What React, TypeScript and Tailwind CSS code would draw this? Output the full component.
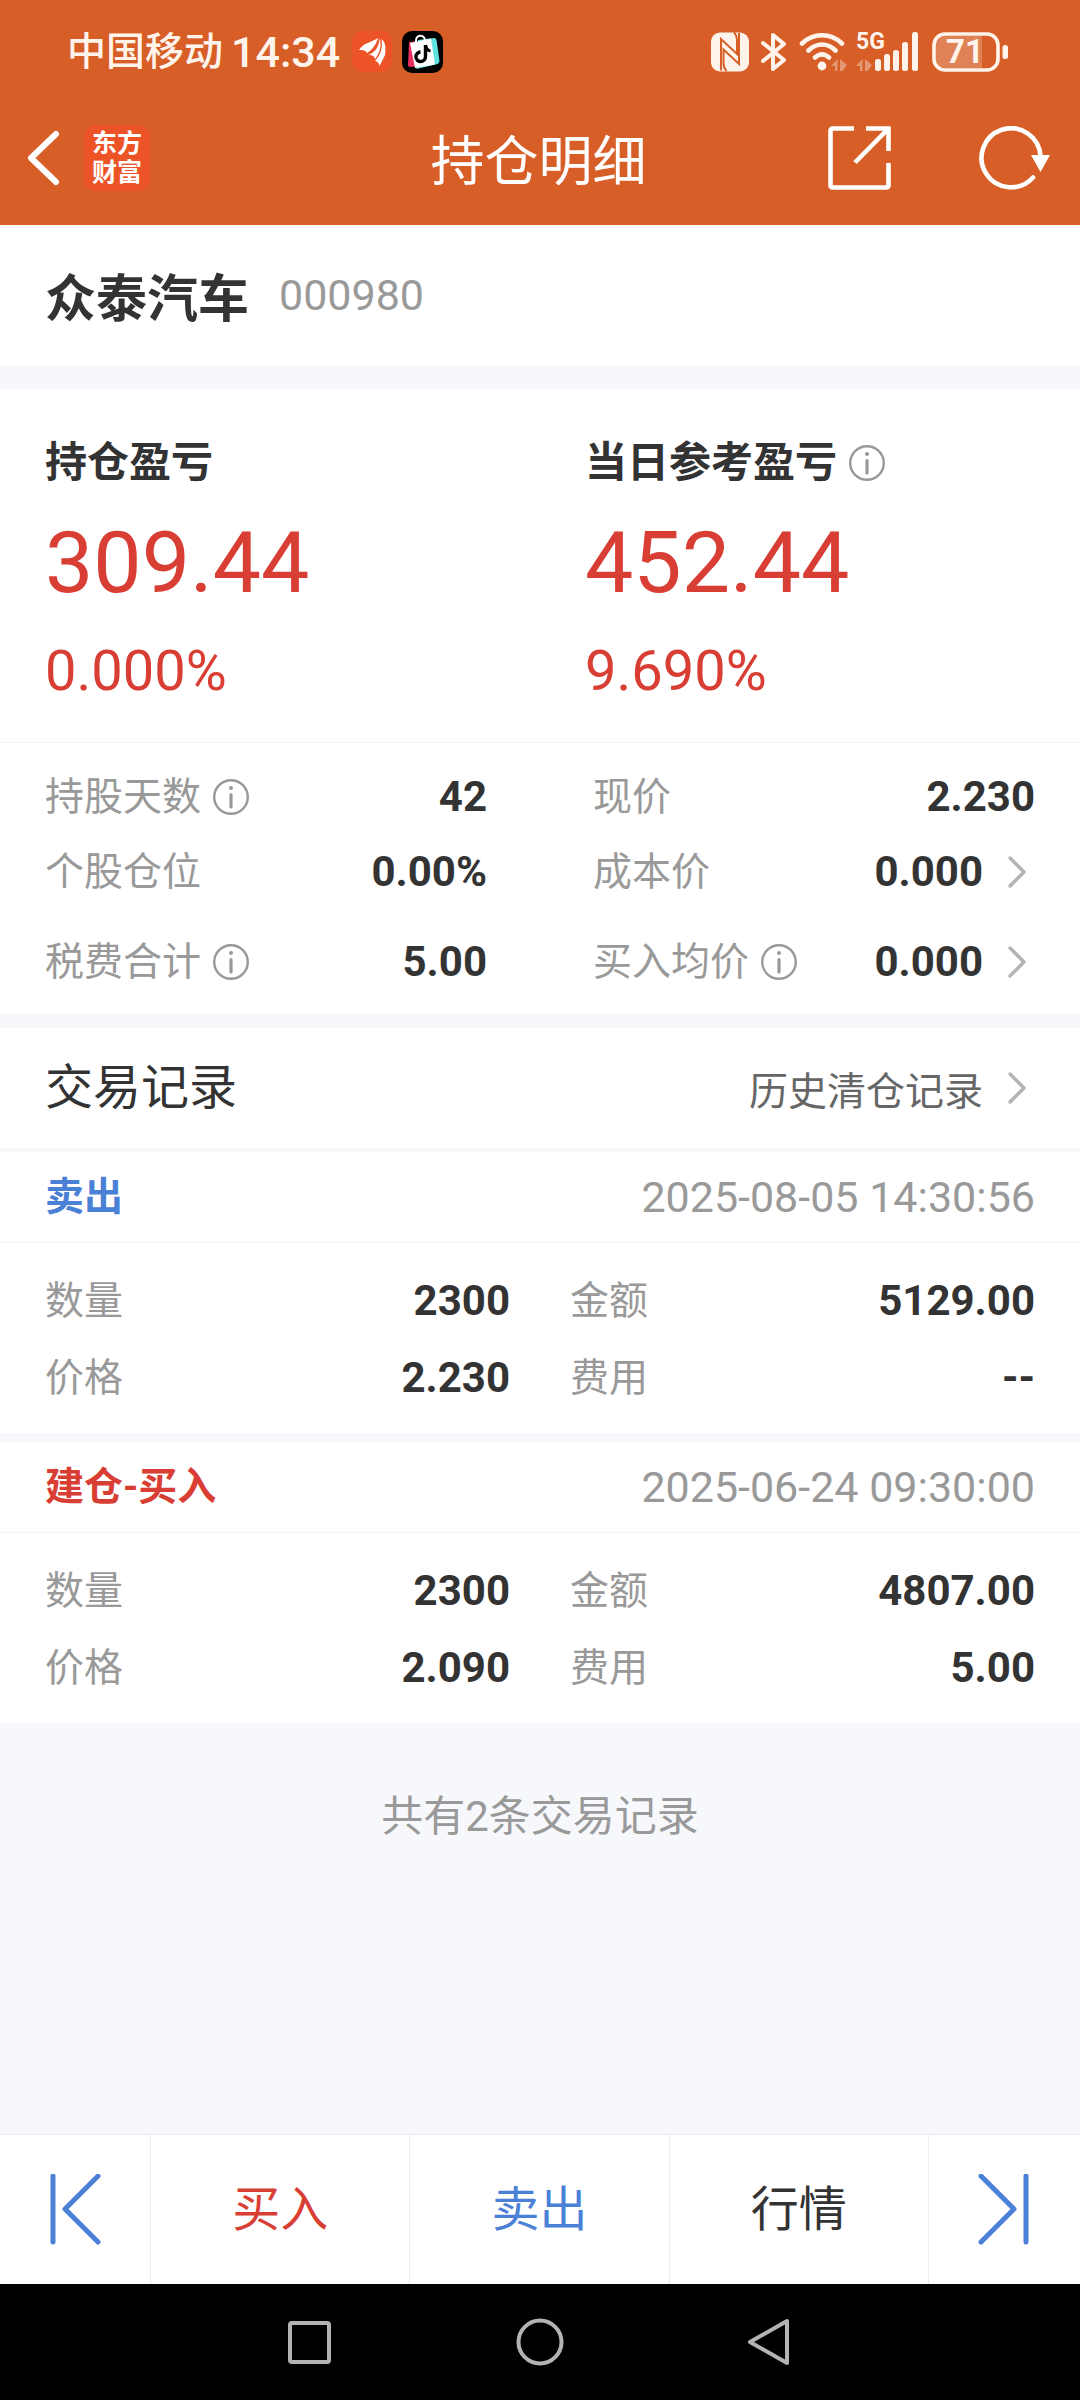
import type { ReactNode } from "react"

type Stat = { label: string; value: string; info?: boolean; more?: boolean }

const LEFT_STATS: Stat[] = [
  { label: "持股天数", value: "42", info: true },
  { label: "个股仓位", value: "0.00%" },
  { label: "税费合计", value: "5.00", info: true },
]

const RIGHT_STATS: Stat[] = [
  { label: "现价", value: "2.230" },
  { label: "成本价", value: "0.000", more: true },
  { label: "买入均价", value: "0.000", info: true, more: true },
]

const RECORDS = [
  {
    id: "r1",
    type: "卖出",
    color: "text-[#4a80d6]",
    time: "2025-08-05 14:30:56",
    fields: [["数量", "2300"], ["金额", "5129.00"], ["价格", "2.230"], ["费用", "--"]],
  },
  {
    id: "r2",
    type: "建仓-买入",
    color: "text-[#d83e34]",
    time: "2025-06-24 09:30:00",
    fields: [["数量", "2300"], ["金额", "4807.00"], ["价格", "2.090"], ["费用", "5.00"]],
  },
]

function InfoButton({ label }: { label: string }) {
  return (
    <button aria-label={`${label}说明`} className="ml-3 shrink-0">
      <svg width="36" height="36" viewBox="0 0 36 36" fill="none" stroke="#999" className="block">
        <circle cx="18" cy="18" r="16.8" strokeWidth="2.4" />
        <path d="M18 15.5v12.5" strokeWidth="3.2" strokeLinecap="round" />
        <circle cx="18" cy="9" r="2" fill="#999" stroke="none" />
      </svg>
    </button>
  )
}

function Chevron() {
  return (
    <svg width="20" height="34" viewBox="0 0 20 34" fill="none" stroke="#b4b4b4" strokeWidth="3.4" strokeLinecap="round" strokeLinejoin="round" className="ml-6 mr-2 shrink-0">
      <path d="M3 3l14 14L3 31" />
    </svg>
  )
}

function DataArrows({ x, y }: { x: number; y: number }) {
  return (
    <path
      transform={`translate(${x} ${y})`}
      d="M6.500 0v12H4V7H0zM9 12V0l7 6-4.500 6z"
      fill="#fff"
      opacity="0.35"
    />
  )
}

function StatusBar() {
  return (
    <div className="flex h-[91px] items-center justify-between pt-[13px] pl-[67px] pr-[71px] text-[#fff4ec]">
      <div className="flex items-center">
        <span className="text-[39px] leading-[48px] font-medium">中国移动</span>
        <span className="ml-2 text-[43px] leading-[48px] font-medium">14:34</span>
        <svg width="40" height="42" viewBox="0 0 40 42" className="ml-3">
          <rect width="40" height="41" rx="10" fill="#ec5428" />
          <path d="M7 19C12 11 19 12 26 7c-2 7-6 12-11 15-1-2.500-4-3.500-8-3z" fill="#fff" />
          <path d="M27.500 7c0 8-4 14-11 17 4 0 6 1 6.500 4C28 22 30 14 27.500 7z" fill="#fff" />
          <path d="M29.500 8c4 3 4.500 8 3.500 16L27.500 35c-.5-3-2-4.500-4.500-5C29 24 31 15 29.500 8z" fill="#fff" />
        </svg>
        <svg width="41" height="42" viewBox="0 0 41 42" className="ml-2.5">
          <rect width="41" height="42" rx="10" fill="#000" />
          <path d="M7 11l8-1 16 24-23 2q-2 0-2-2z" fill="#e8315f" />
          <path d="M16 9l16-2q2 0 2.500 2l3 21q0 2-2 3l-21 5z" fill="#5fe3e0" />
          <path d="M8 12l21-4.500 4 26L13 37z" fill="#fff" />
          <path d="M14 11c-1-8 8-8 9-2" fill="none" stroke="#fff" strokeWidth="2" />
          <path d="M23.500 14c.5 4 2 5.500 5 6" fill="none" stroke="#000" strokeWidth="3" />
          <path d="M23.500 14v11.500a4.800 4.800 0 1 1-5-4.500" fill="none" stroke="#000" strokeWidth="3.400" />
        </svg>
      </div>
      <div className="flex items-center">
        <svg width="38" height="40" viewBox="0 0 38 40">
          <rect width="38" height="39" y="0.500" rx="9" fill="currentColor" />
          <path d="M10 38.500V7l16 15V9c0-4-1.500-7-3-8.500M28 1v31L12.500 17.500V31c0 4 1.500 6.500 3 8" fill="none" stroke="#d75f27" strokeWidth="2" />
        </svg>
        <svg width="26" height="40" viewBox="0 0 26 40" fill="none" stroke="currentColor" strokeWidth="4" strokeLinecap="round" strokeLinejoin="round" className="ml-3">
          <path d="M2 11l21 17-11 9V3l11 9L2 29" />
        </svg>
        <svg width="49" height="40" viewBox="0 0 49 40" fill="none" stroke="currentColor" strokeWidth="4.600" strokeLinecap="round" className="ml-3">
          <path d="M3 11.500c11-11 29-11 40 0M9.500 18.500c8-8 19-8 27 0M16 25.500c4.500-4 9.500-4 14 0" />
          <circle cx="23" cy="34" r="4.400" fill="currentColor" stroke="none" />
          <g stroke="none"><DataArrows x={32} y={27} /></g>
        </svg>
        <div className="relative ml-2">
          <svg width="64" height="40" viewBox="0 0 64 40" fill="currentColor">
            <DataArrows x={0} y={27} />
            <rect x="19" y="27" width="6" height="12" rx="2.500" />
            <rect x="28" y="22" width="6" height="17" rx="2.500" />
            <rect x="37" y="18" width="6" height="21" rx="2.500" />
            <rect x="46" y="10" width="6" height="29" rx="2.500" />
            <rect x="56" y="0" width="6" height="39" rx="2.500" />
          </svg>
          <span className="absolute top-0 left-0 text-[23px] leading-5 font-bold">5G</span>
        </div>
        <div className="relative ml-3">
          <svg width="77" height="40" viewBox="0 0 77 40" fill="none">
            <path d="M12 4h38v32H12q-8 0-8-8V12q0-8 8-8z" fill="#fff" opacity="0.22" />
            <rect x="2" y="2" width="64" height="36" rx="11" stroke="currentColor" strokeWidth="3.600" />
            <rect x="70.500" y="13" width="5.500" height="14" rx="2.500" fill="currentColor" />
          </svg>
          <span className="absolute inset-y-0 left-0 w-[66px] text-center text-[33px] leading-10 font-bold">71</span>
        </div>
      </div>
    </div>
  )
}

function TitleBar() {
  return (
    <div className="grid h-[134px] grid-cols-[1fr_auto_1fr] items-center pl-[26px] pr-[29px]">
      <div className="flex items-center">
        <button aria-label="返回">
          <svg width="34" height="56" viewBox="0 0 34 56" fill="none" stroke="#fff" strokeWidth="6" strokeLinecap="round" strokeLinejoin="round" className="block">
            <path d="M30 4L5 28l25 24" />
          </svg>
        </button>
        <div className="ml-6 flex size-[66px] flex-col items-center justify-center rounded-xl bg-[#ec5428] text-[25px] leading-[29px] font-bold text-white">
          <span>东方</span>
          <span>财富</span>
        </div>
      </div>
      <h1 className="font-['Noto_Sans_CJK_SC',sans-serif] text-[54px] leading-[72px] text-white">持仓明细</h1>
      <div className="flex items-center justify-end gap-[87px]">
        <button aria-label="分享">
          <svg width="64" height="64" viewBox="0 0 64 64" fill="none" stroke="#fff" strokeWidth="4.600" className="block">
            <path d="M26 2.500H4.500a2 2 0 0 0-2 2v55a2 2 0 0 0 2 2h54a2 2 0 0 0 2-2V37" />
            <path d="M38 2.500h22.500V25M27 36.500L60 3" />
          </svg>
        </button>
        <button aria-label="刷新">
          <svg width="72" height="64" viewBox="0 0 72 64" fill="none" className="block">
            <path d="M61.500 30A29.500 29.500 0 1 0 54 51.500" stroke="#fff" strokeWidth="4.600" strokeLinecap="round" />
            <path d="M52 29h19l-9.500 17z" fill="#fff" />
          </svg>
        </button>
      </div>
    </div>
  )
}

function Profit({ label, amount, percent, info }: { label: string; amount: string; percent: string; info?: boolean }) {
  return (
    <div className="px-[45px] text-[#d83e34]">
      <div className="flex h-[60px] items-center">
        <h2 className="text-[42px] leading-[60px] font-bold text-[#333]">{label}</h2>
        {info && <InfoButton label={label} />}
      </div>
      <p className="mt-5 text-[86px] leading-[100px]">{amount}</p>
      <p className="mt-7 text-[56px] leading-[60px]">{percent}</p>
    </div>
  )
}

function StatColumn({ stats }: { stats: Stat[] }) {
  return (
    <dl className="flex-1">
      {stats.map((s) => (
        <div key={s.label} className="flex h-[75px] items-center last:mt-[15px]">
          <dt className="flex items-center text-[39px] leading-[48px] text-[#999]">
            {s.label}
            {s.info && <InfoButton label={s.label} />}
          </dt>
          <dd className="ml-auto flex items-center text-[42px] leading-[48px] font-bold text-[#333]">
            {s.value}
            {s.more && <Chevron />}
          </dd>
        </div>
      ))}
    </dl>
  )
}

function TradeRecord({ record }: { record: (typeof RECORDS)[number] }) {
  return (
    <article className="bg-white">
      <header className="flex h-[91px] items-center justify-between border-b border-[#f4f5f7] px-[45px]">
        <h3 className={`text-[39px] leading-[48px] font-bold ${record.color}`}>{record.type}</h3>
        <time className="text-[43px] leading-[48px] text-[#999]">{record.time}</time>
      </header>
      <dl className="grid grid-cols-2 gap-x-[60px] px-[45px] pt-[19px] pb-[17px]">
        {record.fields.map(([label, value]) => (
          <div key={label} className="flex h-[77px] items-center justify-between">
            <dt className="text-[39px] leading-[48px] text-[#999]">{label}</dt>
            <dd className="text-[42px] leading-[48px] font-bold text-[#333]">{value}</dd>
          </div>
        ))}
      </dl>
    </article>
  )
}

function StepButton({ label, children }: { label: string; children: ReactNode }) {
  return (
    <button aria-label={label} className="flex w-[151px] items-center justify-center">
      <svg width="54" height="72" viewBox="0 0 54 72" fill="none" stroke="#4a80d6" strokeWidth="5" strokeLinecap="round" strokeLinejoin="round">
        {children}
      </svg>
    </button>
  )
}

export default function App() {
  return (
    <div className="flex min-h-screen flex-col bg-[#f6f8fb] font-[Roboto,'Noto_Sans_CJK_SC',sans-serif]">
      <header className="bg-[#d75f27]">
        <StatusBar />
        <TitleBar />
      </header>

      <main className="flex-1">
        <section className="flex h-[140px] items-center bg-white px-[45px]">
          <h2 className="font-['Noto_Sans_CJK_SC',sans-serif] text-[51px] leading-[60px] font-bold text-[#333]">众泰汽车</h2>
          <span className="ml-[30px] text-[43px] leading-[60px] text-[#999]">000980</span>
        </section>

        <section className="mt-6 bg-white">
          <div className="grid grid-cols-2 border-b border-[#f4f5f7] pt-11 pb-[41px]">
            <Profit label="持仓盈亏" amount="309.44" percent="0.000%" />
            <Profit label="当日参考盈亏" amount="452.44" percent="9.690%" info />
          </div>
          <div className="flex gap-[106px] px-[45px] pt-4 pb-3.5">
            <StatColumn stats={LEFT_STATS} />
            <StatColumn stats={RIGHT_STATS} />
          </div>
        </section>

        <section className="mt-[15px]">
          <div className="flex h-[120px] items-center justify-between bg-white px-[45px]">
            <h2 className="text-[48px] leading-[60px] text-[#333]">交易记录</h2>
            <a href="#history" className="flex items-center font-['Noto_Sans_CJK_SC',sans-serif] text-[39px] leading-[60px] text-[#666]">
              历史清仓记录
              <Chevron />
            </a>
          </div>
          <div className="mt-1 space-y-[9px]">
            {RECORDS.map((r) => <TradeRecord key={r.id} record={r} />)}
          </div>
          <p className="py-16 text-center text-[42px] leading-[60px] text-[#999]">共有2条交易记录</p>
        </section>
      </main>

      {/* Trade actions */}
      <footer className="flex h-[150px] divide-x divide-[#ececec] border-t border-[#ececec] bg-white text-[48px] leading-[60px]">
        <StepButton label="上一只">
          <path d="M5 2v66M50 2L17 35l33 33" />
        </StepButton>
        <button className="flex-1 text-[#d83e34]">买入</button>
        <button className="flex-1 text-[#4a80d6]">卖出</button>
        <button className="flex-1 text-[#333]">行情</button>
        <StepButton label="下一只">
          <path d="M49 2v66M4 2l33 33L4 68" />
        </StepButton>
      </footer>

      {/* System navigation */}
      <nav className="flex h-[116px] items-center justify-center bg-black">
        <button aria-label="最近任务" className="flex w-[230px] justify-center">
          <svg width="50" height="50" viewBox="0 0 50 50" fill="none" stroke="#b3b3b3" strokeWidth="4">
            <rect x="5" y="6" width="39" height="39" rx="2" />
          </svg>
        </button>
        <button aria-label="主屏幕" className="flex w-[230px] justify-center">
          <svg width="50" height="50" viewBox="0 0 50 50" fill="none" stroke="#b3b3b3" strokeWidth="4">
            <circle cx="25" cy="25" r="21.500" />
          </svg>
        </button>
        <button aria-label="返回上一页" className="flex w-[230px] justify-center">
          <svg width="50" height="50" viewBox="0 0 50 50" fill="none" stroke="#b3b3b3" strokeWidth="4" strokeLinejoin="round">
            <path d="M42 4v42L5 25z" />
          </svg>
        </button>
      </nav>
    </div>
  )
}
